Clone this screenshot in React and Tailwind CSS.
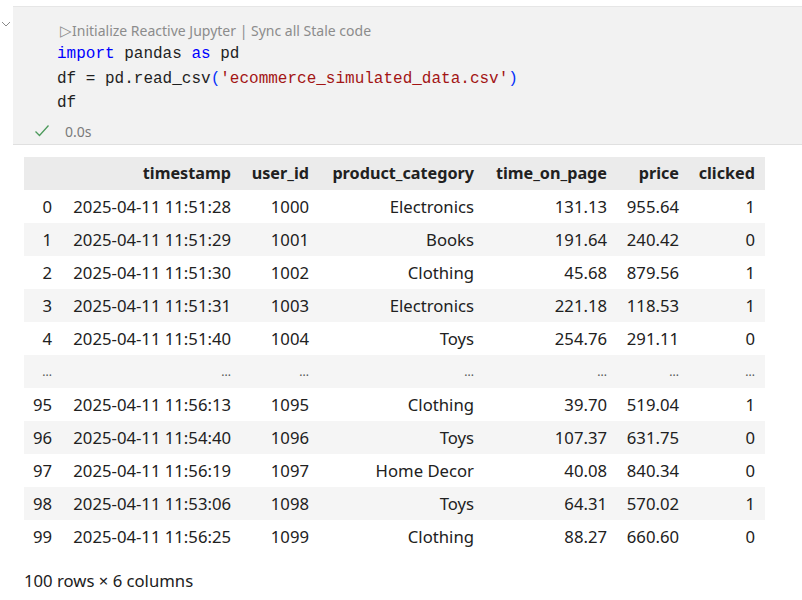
import React from "react";

const columns = [
  { key: "idx", label: "", width: "w-[38px]" },
  { key: "timestamp", label: "timestamp", width: "w-[179px]" },
  { key: "user_id", label: "user_id", width: "w-[78px]" },
  { key: "product_category", label: "product_category", width: "w-[165px]" },
  { key: "time_on_page", label: "time_on_page", width: "w-[133px]" },
  { key: "price", label: "price", width: "w-[72px]" },
  { key: "clicked", label: "clicked", width: "w-[76px]" },
];

const rows = [
  ["0", "2025-04-11 11:51:28", "1000", "Electronics", "131.13", "955.64", "1"],
  ["1", "2025-04-11 11:51:29", "1001", "Books", "191.64", "240.42", "0"],
  ["2", "2025-04-11 11:51:30", "1002", "Clothing", "45.68", "879.56", "1"],
  ["3", "2025-04-11 11:51:31", "1003", "Electronics", "221.18", "118.53", "1"],
  ["4", "2025-04-11 11:51:40", "1004", "Toys", "254.76", "291.11", "0"],
  ["...", "...", "...", "...", "...", "...", "..."],
  ["95", "2025-04-11 11:56:13", "1095", "Clothing", "39.70", "519.04", "1"],
  ["96", "2025-04-11 11:54:40", "1096", "Toys", "107.37", "631.75", "0"],
  ["97", "2025-04-11 11:56:19", "1097", "Home Decor", "40.08", "840.34", "0"],
  ["98", "2025-04-11 11:53:06", "1098", "Toys", "64.31", "570.02", "1"],
  ["99", "2025-04-11 11:56:25", "1099", "Clothing", "88.27", "660.60", "0"],
];

function Chevron() {
  return (
    <svg width="10" height="6" viewBox="0 0 10 6" className="mt-[15px] ml-[1px]">
      <path d="M1 1 L5 5 L9 1" fill="none" stroke="#8a8a8a" strokeWidth="1" />
    </svg>
  );
}

function Check() {
  return (
    <svg width="16" height="14" viewBox="0 0 16 14">
      <path d="M1.5 7.5 L5.5 11.5 L14.5 1.5" fill="none" stroke="#4d9a5c" strokeWidth="1.3" />
    </svg>
  );
}

export default function App() {
  return (
    <div className="w-[802px] h-[600px] bg-white overflow-hidden font-['Noto_Sans',sans-serif] text-[#212121]">
      {/* Code cell */}
      <div className="flex pt-[6px]">
        <div className="w-[13px] shrink-0">
          <Chevron />
        </div>
        <div className="flex-1 bg-[#f2f2f2] border-t border-[#e6e6e6] border-b border-b-[#e0e0e0] h-[139px]">
          <div className="pl-[47px] pt-[13px] h-[36px] text-[14px] leading-[22px] text-[#8c8c8c]">
            <span className="text-[15px] leading-none">▷</span>Initialize Reactive Jupyter | Sync all Stale code
          </div>
          <pre className="pl-[44px] -mt-[1px] font-['Liberation_Mono',monospace] text-[16px] leading-[24.5px] text-[#1f1f1f]">
            <div>
              <span className="text-[#0000ff]">import</span> pandas <span className="text-[#0000ff]">as</span> pd
            </div>
            <div>
              df = pd.read_csv<span className="text-[#0431fa]">(</span>
              <span className="text-[#a31515]">'ecommerce_simulated_data.csv'</span>
              <span className="text-[#0431fa]">)</span>
            </div>
            <div>df</div>
          </pre>
          <div className="flex items-center pl-[21px] pt-[5px] text-[14px] text-[#7a7a7a]">
            <Check />
            <span className="ml-[15px]">0.0s</span>
          </div>
        </div>
      </div>

      {/* Output */}
      <div className="pl-[24px] pt-[12px]">
        <table className="table-fixed border-collapse text-[16.7px]">
          <colgroup>
            {columns.map((c) => (
              <col key={c.key} className={c.width} />
            ))}
          </colgroup>
          <thead>
            <tr className="bg-[#ebebeb] h-[33px]">
              {columns.map((c) => (
                <th key={c.key} className="text-right pr-[10px] font-bold text-[16.2px] whitespace-nowrap">
                  {c.label}
                </th>
              ))}
            </tr>
          </thead>
          <tbody>
            {rows.map((r, i) => (
              <tr key={i} className={`h-[33px] ${i % 2 === 1 ? "bg-[#f5f5f5]" : "bg-white"}`}>
                {r.map((v, j) => (
                  <td
                    key={j}
                    className={`text-right pr-[10px] whitespace-nowrap ${v === "..." ? "text-[12px] text-[#555]" : ""}`}
                  >
                    {v}
                  </td>
                ))}
              </tr>
            ))}
          </tbody>
        </table>
        <div className="pt-[15px] text-[16.7px]">100 rows × 6 columns</div>
      </div>
    </div>
  );
}
